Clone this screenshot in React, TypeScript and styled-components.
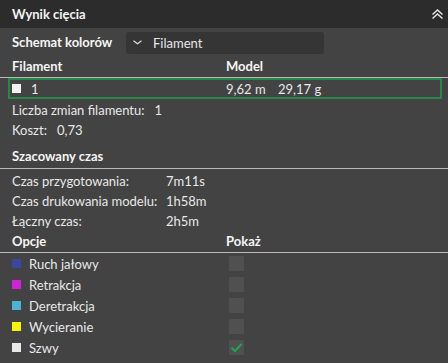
import styled, { createGlobalStyle } from 'styled-components';

const GlobalStyle = createGlobalStyle`
  html, body {
    margin: 0;
    padding: 0;
    background: #434343;
  }
  body {
    font-family: Lato, "Noto Sans", sans-serif;
    font-size: 13px;
    color: #e8e8e8;
    white-space: nowrap;
  }
`;

const filaments = [{ id: 1, color: '#f2f2f2', length: '9,62 m', weight: '29,17 g' }];

const times = [
  { label: 'Czas przygotowania:', value: '7m11s' },
  { label: 'Czas drukowania modelu:', value: '1h58m' },
  { label: 'Łączny czas:', value: '2h5m' },
];

const options = [
  { label: 'Ruch jałowy', color: '#3a46a3', checked: false },
  { label: 'Retrakcja', color: '#d122d6', checked: false },
  { label: 'Deretrakcja', color: '#4ab3d6', checked: false },
  { label: 'Wycieranie', color: '#f5f500', checked: false },
  { label: 'Szwy', color: '#e8e8e8', checked: true },
];

const ChevronsUp = () => (
  <svg width="13" height="10" viewBox="0 0 13 10" fill="none">
    <path d="M1.5 5.5 L6.5 1 L11.5 5.5" stroke="#e6e6e6" strokeWidth="1.4" />
    <path d="M1.5 9.5 L6.5 5 L11.5 9.5" stroke="#e6e6e6" strokeWidth="1.4" />
  </svg>
);

const ChevronDown = () => (
  <svg width="9" height="5" viewBox="0 0 9 5" fill="none">
    <path d="M0.5 0.8 L4.5 3.8 L8.5 0.8" stroke="#e0e0e0" strokeWidth="1.1" />
  </svg>
);

const Check = () => (
  <svg width="13" height="11" viewBox="0 0 13 11" fill="none">
    <path d="M1.5 5.8 L5 9 L11.5 2" stroke="#1ea64c" strokeWidth="2.2" />
  </svg>
);

const App = () => {
  return (
    <Panel>
      <GlobalStyle />
      <Header>
        <Title>Wynik cięcia</Title>
        <ChevronsUp />
      </Header>

      <SchemeRow>
        <Label>Schemat kolorów</Label>
        <Select>
          <ChevronDown />
          <span>Filament</span>
        </Select>
      </SchemeRow>

      <SectionTitle>
        <Label>Filament</Label>
        <Label>Model</Label>
      </SectionTitle>

      {filaments.map((f) => (
        <FilamentRow key={f.id}>
          <Cell gap={10}>
            <Swatch color={f.color} />
            <span>{f.id}</span>
          </Cell>
          <Cell gap={0}>
            <Value>{f.length}</Value>
            <span>{f.weight}</span>
          </Cell>
        </FilamentRow>
      ))}

      <InfoRow>
        Liczba zmian filamentu:<Value2>1</Value2>
      </InfoRow>
      <InfoRow>
        Koszt:<Value2>0,73</Value2>
      </InfoRow>

      <SectionTitle tall>
        <Label>Szacowany czas</Label>
      </SectionTitle>

      <TimeList>
        {times.map((t) => (
          <TimeRow key={t.label}>
            <span>{t.label}</span>
            <span>{t.value}</span>
          </TimeRow>
        ))}
      </TimeList>

      <SectionTitle>
        <Label>Opcje</Label>
        <Label>Pokaż</Label>
      </SectionTitle>

      {options.map((o) => (
        <OptionRow key={o.label}>
          <Cell gap={8}>
            <Swatch color={o.color} />
            <span>{o.label}</span>
          </Cell>
          <CheckBox>{o.checked && <Check />}</CheckBox>
        </OptionRow>
      ))}
    </Panel>
  );
};

export default App;

const Panel = styled.div`
  width: 448px;
  height: 363px;
  background: #434343;
  overflow: hidden;
`;

const Header = styled.div`
  height: 28px;
  background: #2c2c2c;
  display: flex;
  align-items: center;
  justify-content: space-between;
  padding: 0 4px 0 12px;
  box-sizing: border-box;
`;

const Title = styled.span`
  font-weight: 700;
  color: #f2f2f2;
`;

const Label = styled.span`
  font-weight: 700;
  color: #f5f5f5;
`;

const SchemeRow = styled.div`
  height: 28px;
  display: grid;
  grid-template-columns: 114px 198px;
  align-items: center;
  padding-left: 12px;
`;

const Select = styled.div`
  height: 22px;
  margin-top: 1px;
  box-sizing: border-box;
  background: #353535;
  border-radius: 3px;
  display: flex;
  align-items: center;
  gap: 11px;
  padding-left: 7px;
  color: #e6e6e6;
`;

const SectionTitle = styled.div<{ tall?: boolean }>`
  height: ${(p) => (p.tall ? 30 : 22)}px;
  display: grid;
  grid-template-columns: 214px 1fr;
  align-items: end;
  padding: 0 0 2px 12px;
  box-sizing: border-box;
  border-bottom: 1px solid #b9b9b9;
  line-height: 20px;
`;

const FilamentRow = styled.div`
  height: 21px;
  margin: 0 6px 0 8px;
  box-sizing: border-box;
  border: 2px solid #27874b;
  display: grid;
  grid-template-columns: 214px 1fr;
  align-items: center;
  padding-left: 2px;
`;

const Cell = styled.div<{ gap: number }>`
  display: flex;
  align-items: center;
  gap: ${(p) => p.gap}px;
`;

const Swatch = styled.span<{ color: string }>`
  width: 9px;
  height: 9px;
  background: ${(p) => p.color};
  flex-shrink: 0;
`;

const Value = styled.span`
  width: 52px;
`;

const InfoRow = styled.div`
  height: 19px;
  margin-top: 1px;
  display: flex;
  align-items: center;
  padding-left: 12px;
`;

const Value2 = styled.span`
  margin-left: 10px;
`;

const TimeList = styled.div`
  padding-top: 2px;
`;

const TimeRow = styled.div`
  height: 20px;
  display: grid;
  grid-template-columns: 154px 1fr;
  align-items: center;
  padding-left: 12px;
`;

const OptionRow = styled.div`
  height: 21px;
  display: grid;
  grid-template-columns: 217px 1fr;
  align-items: center;
  padding-left: 12px;
`;

const CheckBox = styled.div`
  width: 15px;
  height: 15px;
  background: #505050;
  display: flex;
  align-items: center;
  justify-content: center;
`;
